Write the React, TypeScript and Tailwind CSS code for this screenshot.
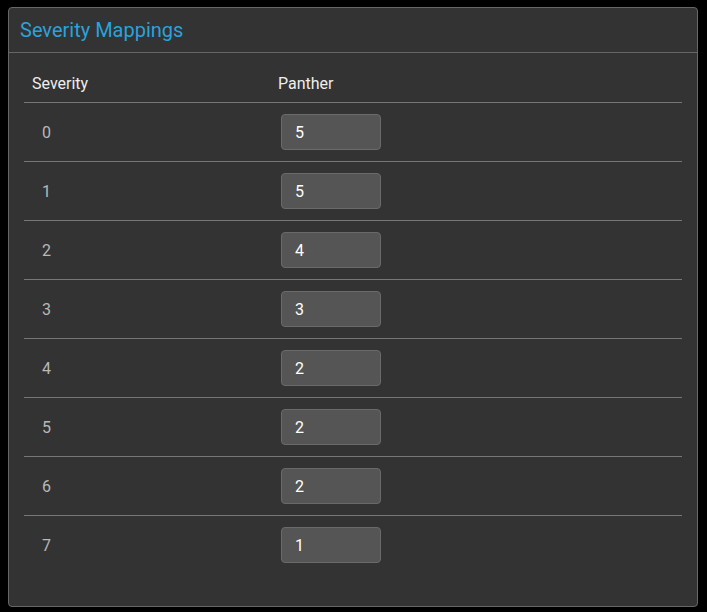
import React from "react";

const rows = [
  { sev: "0", val: "5" },
  { sev: "1", val: "5" },
  { sev: "2", val: "4" },
  { sev: "3", val: "3" },
  { sev: "4", val: "2" },
  { sev: "5", val: "2" },
  { sev: "6", val: "2" },
  { sev: "7", val: "1" },
];

export default function App() {
  return (
    <div
      className="w-[707px] h-[612px] bg-black pt-[7px] pl-[8px]"
      style={{ fontFamily: "Roboto, 'Noto Sans', sans-serif" }}
    >
      <div className="w-[690px] h-[600px] border border-[#666] rounded-[4px] bg-[#333] flex flex-col">
        <div className="h-[45px] border-b border-[#666] flex items-center px-[11px]">
          <span className="text-[20px] text-[#2aa2dd] leading-none">Severity Mappings</span>
        </div>
        <div className="px-[15px] pt-[11px]">
          <div className="grid grid-cols-[246px_1fr] h-[39px] border-b border-[#777] items-center text-[16px] text-[#eee]">
            <div className="pl-[8px] pt-[1px]">Severity</div>
            <div className="pl-[8px] pt-[1px]">Panther</div>
          </div>
          {rows.map((r, i) => (
            <div
              key={r.sev}
              className={
                "grid grid-cols-[246px_1fr] items-center " +
                (i < rows.length - 1 ? "h-[59px] border-b border-[#777]" : "h-[58px]")
              }
            >
              <div className="pl-[18px] pt-[2px] text-[16px] text-[#b8b8b8]">{r.sev}</div>
              <div className="pl-[11px]">
                <input
                  defaultValue={r.val}
                  className="w-[100px] h-[36px] bg-[#555] border border-[#6a6a6a] rounded-[4px] pl-[13px] text-[16px] text-white outline-none"
                  style={{ fontFamily: "Roboto, 'Noto Sans', sans-serif" }}
                />
              </div>
            </div>
          ))}
        </div>
      </div>
    </div>
  );
}
